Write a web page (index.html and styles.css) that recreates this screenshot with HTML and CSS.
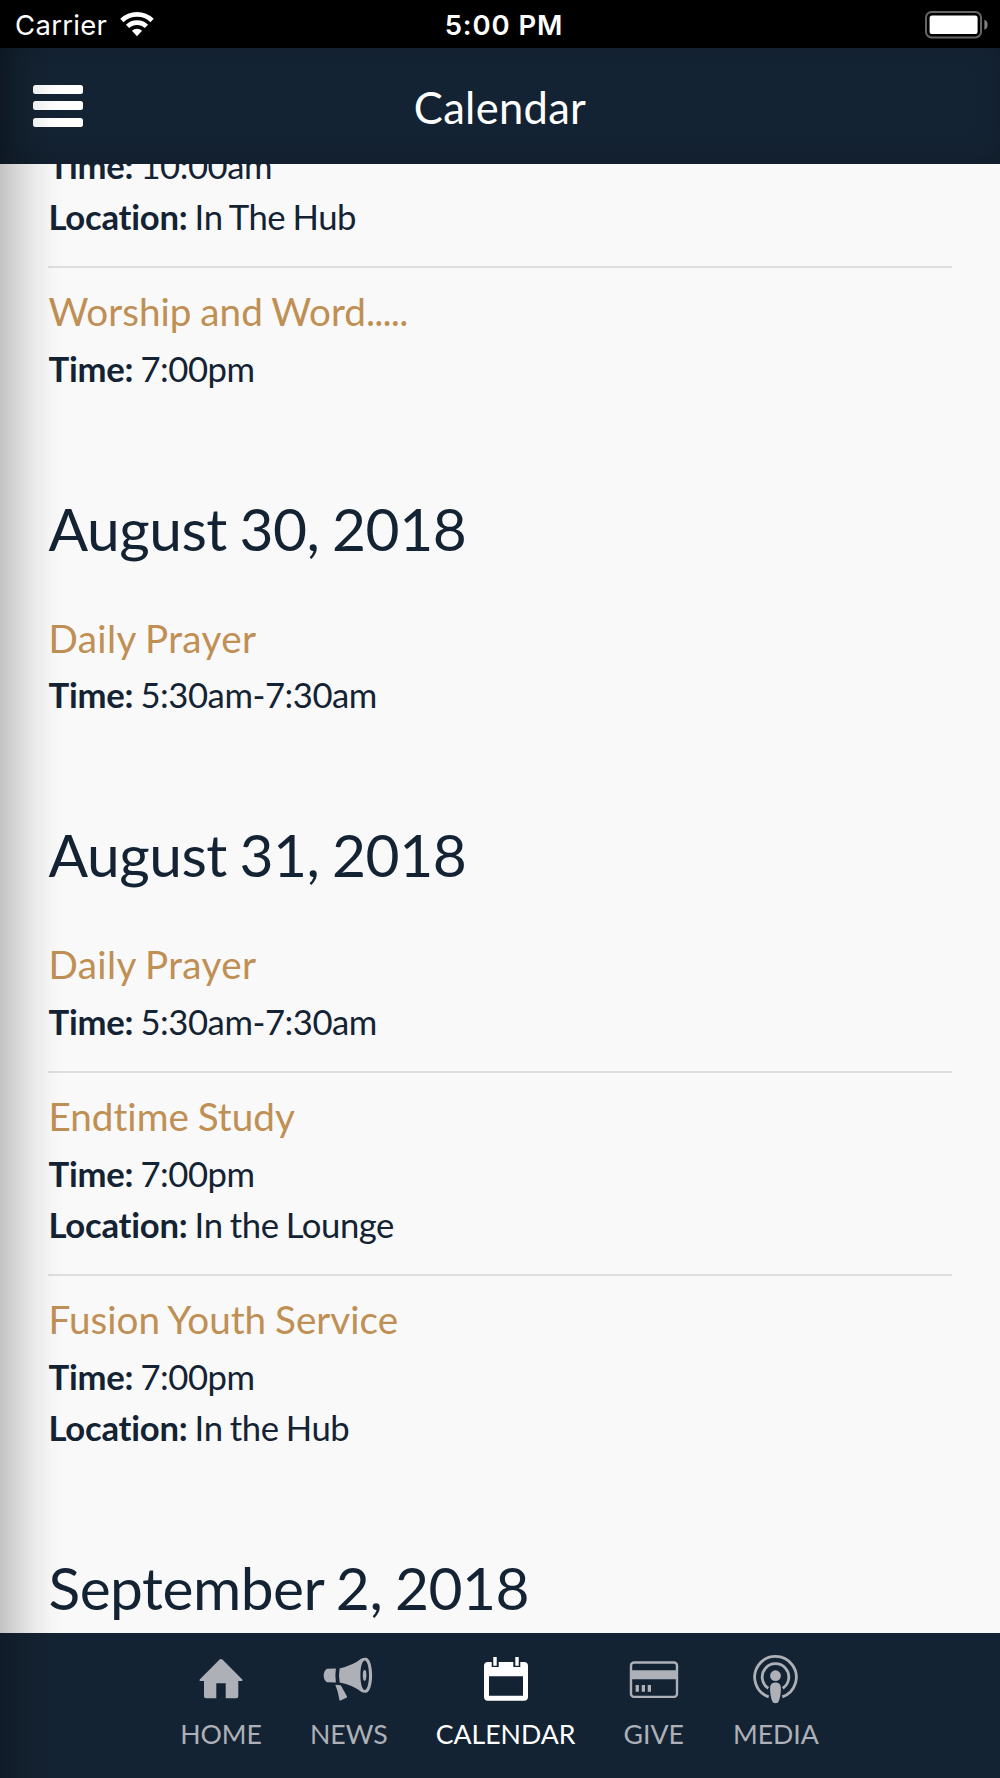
FILE: index.html
```html
<!DOCTYPE html>
<html lang="en">
<head>
<meta charset="utf-8">
<title>Calendar</title>
<link rel="stylesheet" href="styles.css">
</head>
<body>
<div class="app">
  <div class="status">
    <div class="carrier"><span>Carrier</span>
      <svg class="wifi" width="34" height="25" viewBox="0 0 36 26">
        <g fill="none" stroke="#fff" stroke-width="5"><path d="M2 8.800a23 23 0 0 1 32 0"/><path d="M8 15a14.400 14.400 0 0 1 20 0"/></g>
        <path fill="#fff" d="M12.600 19.700a7.800 7.800 0 0 1 10.800 0L18 25.400z"/>
      </svg>
    </div>
    <div class="clock">5:00 PM</div>
    <svg class="battery" width="63" height="28" viewBox="0 0 63 28">
      <rect x="1" y="1" width="55" height="25.4" rx="5.5" fill="none" stroke="#666" stroke-width="2"/>
      <rect x="4.6" y="4.4" width="48" height="18.6" rx="2.6" fill="#fff"/>
      <path fill="#808080" d="M59.4 8.8q3.2 1.2 3.2 5t-3.2 5z"/>
    </svg>
  </div>
  <header class="header">
    <div class="menu"><i></i><i></i><i></i></div>
    <h1>Calendar</h1>
  </header>
  <main class="content">
    <section class="events first">
      <div class="event"><p><b>Time:</b> 10:00am</p><p><b>Location:</b> In The Hub</p></div>
      <div class="event"><h3>Worship and Word<span class="dots">.....</span></h3><p><b>Time:</b> 7:00pm</p></div>
    </section>
    <section class="events">
      <h2>August 30, 2018</h2>
      <div class="event"><h3 class="daily">Daily Prayer</h3><p><b>Time:</b> 5:30am-7:30am</p></div>
    </section>
    <section class="events">
      <h2>August 31, 2018</h2>
      <div class="event"><h3 class="daily">Daily Prayer</h3><p><b>Time:</b> 5:30am-7:30am</p></div>
      <div class="event"><h3>Endtime Study</h3><p><b>Time:</b> 7:00pm</p><p><b>Location:</b> In the Lounge</p></div>
      <div class="event"><h3>Fusion Youth Service</h3><p><b>Time:</b> 7:00pm</p><p><b>Location:</b> In the Hub</p></div>
    </section>
    <section class="events">
      <h2>September 2, 2018</h2>
    </section>
  </main>
  <nav class="tabs">
    <div class="tab">
      <svg viewBox="0 0 52 52"><path d="M24.6 6.6q1.4-1.2 2.8 0L47.3 26.6q.9 1.4-.6 1.4H43.3V43.3q0 2-2 2H30.7V30.3H21.3V45.3H11q-2 0-2-2V28H5.3q-1.5 0-.6-1.4z"/></svg>
      <span>HOME</span>
    </div>
    <div class="tab">
      <svg viewBox="0 0 52 52"><path d="M4 15.7 12.9 15.4Q11.8 22 12.9 29.5L4 29.3Q.7 27 .7 22.5T4 15.7z"/><path fill-rule="evenodd" d="M16.6 15.4Q30 12.5 38.5 5.6q1.6-.8 4.2-.8c4 0 6.4 8 6.4 17.5s-2.400 17.500-6.400 17.500q-2.600 0-4.200-.8Q30 32 16.600 29.500 15.400 22 16.600 15.400zM41.700 7.600c-2.500 0-4.300 6.600-4.300 14.700s1.800 14.700 4.300 14.700S46 30.400 46 22.300 44.200 7.600 41.700 7.600z"/><ellipse cx="41.600" cy="22.300" rx="1.800" ry="5.600"/><path d="M12.300 31.700 17.700 32.200Q20 36 24 43.500q.2.900-.6 1.300L17.600 47.600q-1 .3-1.200-.8Q15 38 12.300 31.700z"/></svg>
      <span>NEWS</span>
    </div>
    <div class="tab active">
      <svg viewBox="0 0 52 52"><path fill-rule="evenodd" d="M8 9H11.700V14H18.700V9H33.300V14H40.300V9H44q4 0 4 4V43.700q0 4-4 4H8q-4 0-4-4V13q0-4 4-4zM9 23.300V42.700H43V23.300z"/><path d="M13.300 4h3.400v8.700h-3.400zM35.300 4h3.400v8.700h-3.400z"/></svg>
      <span>CALENDAR</span>
    </div>
    <div class="tab">
      <svg viewBox="0 0 52 52"><rect x="3" y="9.500" width="46" height="34.400" rx="3" fill="none" stroke="currentColor" stroke-width="2.400"/><path d="M3 17.300h46v9H3zM7.600 32h3.300v6.700H7.600zM13.700 32h3.300v6.700h-3.300zM19.700 32h3.300v6.700h-3.300z"/></svg>
      <span>GIVE</span>
    </div>
    <div class="tab">
      <svg viewBox="0 0 52 52"><g fill="none" stroke="currentColor" stroke-width="2.800"><path d="M18.700 43.900A20.800 20.800 0 1 1 32.300 43.900"/><path d="M18.300 35.200A13.300 13.300 0 1 1 32.700 35.200"/></g><circle cx="25.500" cy="22.700" r="5.400"/><path d="M25.500 29.500c3.600 0 5.400 2 5.400 6 0 5-.9 9.500-1.900 12.200q-.9 2.600-3.500 2.600T22 47.700c-1-2.700-1.900-7.200-1.900-12.200 0-4 1.800-6 5.400-6z"/></svg>
      <span>MEDIA</span>
    </div>
  </nav>
  <div class="edge-shadow"></div>
</div>
</body>
</html>
```
FILE: styles.css
```css
* { box-sizing: border-box; }
body { margin: 0; background: #f9f9f9; }
h1, h2, h3, p { margin: 0; font-weight: 400; }
.app {
  position: relative;
  display: flex;
  flex-direction: column;
  width: 1000px;
  height: 1778px;
  overflow: hidden;
  background: #f9f9f9;
  color: #142333;
  font-family: Lato, sans-serif;
  font-variant-ligatures: none;
}
.status {
  display: grid;
  grid-template-columns: 1fr auto 1fr;
  align-items: center;
  flex: none;
  height: 48px;
  padding: 2px 12px 0 15px;
  background: #000;
  color: #fff;
  font: 27.5px/46px Inter, sans-serif;
}
.carrier { display: flex; align-items: center; gap: 13px; letter-spacing: .3px; }
.wifi { margin-top: -2px; }
.clock { padding-left: 5px; font-weight: 600; letter-spacing: .9px; }
.battery { justify-self: end; margin-top: -1px; }
.header {
  display: grid;
  grid-template-columns: 1fr auto 1fr;
  align-items: center;
  flex: none;
  height: 116px;
  padding: 0 33px;
  background: #142333;
  box-shadow: inset 0 -6px 26px rgba(0, 0, 0, .16);
  color: #fff;
}
.header h1 { padding-top: 1px; font-size: 43.5px; line-height: 60px; letter-spacing: .3px; }
.menu { display: flex; flex-direction: column; gap: 7.5px; width: 50px; margin-top: -1px; }
.menu i { height: 9px; border-radius: 2.5px; background: #fff; }
.content {
  display: flex;
  flex-direction: column;
  flex: 1;
  min-height: 0;
  padding: 0 48px;
  overflow: hidden;
}
.events { flex: none; padding-bottom: 93.3px; }
.first { margin-top: -23px; }
.event + .event { margin-top: 24px; padding-top: 17px; border-top: 2px solid #dedede; }
h2 { padding: 0 0 43.7px; font-size: 58.67px; line-height: 80px; letter-spacing: -.5px; word-spacing: -1.8px; text-indent: .5px; }
h3 { margin-bottom: 6.7px; color: #bf8f54; font-size: 38.67px; line-height: 52px; text-indent: .5px; word-spacing: -1px; }
.daily { letter-spacing: .35px; }
.dots { letter-spacing: -.8px; }
p { font-size: 34.67px; line-height: 50.67px; letter-spacing: -.44px; word-spacing: -1.2px; text-indent: .5px; }
b { font-weight: 700; letter-spacing: -.25px; }
.tabs {
  display: flex;
  justify-content: center;
  gap: 48px;
  flex: none;
  height: 145px;
  padding: 20px 1px 0 0;
  background: #142333;
  color: #adb1b7;
}
.tab { display: flex; flex-direction: column; align-items: center; }
.tab:last-child { margin-left: 1px; }
.tab.active { color: #fff; }
.tab svg { width: 52px; height: 52px; fill: currentColor; }
.tab span { margin-top: 13px; font-size: 26.67px; line-height: 32px; }
.edge-shadow {
  position: absolute;
  inset: 48px auto 0 0;
  width: 64px;
  background: linear-gradient(90deg, rgba(0,0,0,.22), rgba(0,0,0,.14) 25%, rgba(0,0,0,.06) 55%, rgba(0,0,0,.015) 80%, transparent);
}
```
